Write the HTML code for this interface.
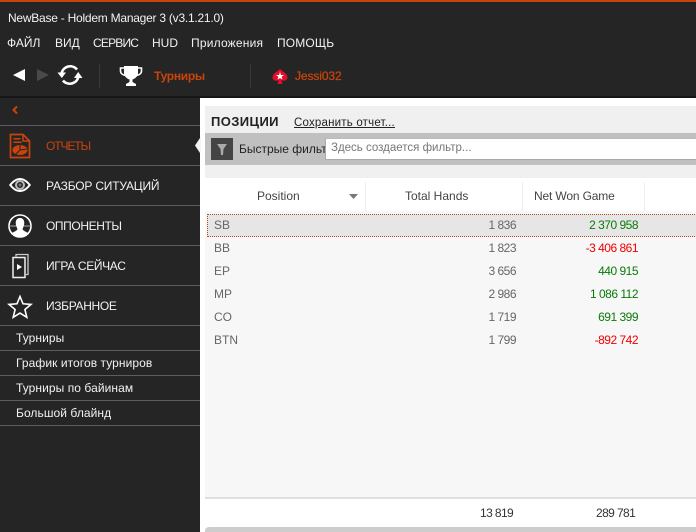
<!DOCTYPE html>
<html><head><meta charset="utf-8">
<style>
html,body{margin:0;padding:0;background:#252525}
#r{position:relative;width:696px;height:532px;overflow:hidden;background:#252525;font-family:"Liberation Sans",sans-serif;font-size:12px}
#r div,#r svg,#r a{position:absolute}
.t{white-space:nowrap;line-height:14px}
.w{color:#f2f2f2}
.o{color:#c8440c}
.l{left:0;width:200px;height:1px;background:#5e5e5e}
.m{left:46px;color:#f2f2f2;white-space:nowrap;line-height:14px;font-size:12px}
.s{left:16px;color:#f2f2f2;white-space:nowrap;line-height:14px;font-size:12px;letter-spacing:.07px}
.row{left:205px;width:491px;height:23px;color:#666}
.row div{top:4px;line-height:14px;white-space:nowrap;letter-spacing:-.5px}
.row .c1{left:9px;letter-spacing:0}
.c2{right:180px}
.c3{right:58px}
.g{color:#0a7a0a}
.d{color:#f00000}
</style></head><body>
<div id="r">
<div style="left:0;top:0;width:696px;height:2px;background:#c8440c"></div>
<div class="t w" style="left:8px;top:11px;font-size:12px;letter-spacing:-.24px">NewBase - Holdem Manager 3 (v3.1.21.0)</div>
<div class="t w" style="left:7px;top:36px">ФАЙЛ</div>
<div class="t w" style="left:55px;top:36px">ВИД</div>
<div class="t w" style="left:93px;top:36px;letter-spacing:-.8px">СЕРВИС</div>
<div class="t w" style="left:152px;top:36px">HUD</div>
<div class="t w" style="left:191px;top:36px;letter-spacing:.2px">Приложения</div>
<div class="t w" style="left:277px;top:36px;letter-spacing:.15px">ПОМОЩЬ</div>

<svg style="left:0;top:55px" width="100" height="40" viewBox="0 0 100 40">
<polygon points="13,20 25,14 25,26" fill="#fff"/>
<polygon points="49,20 37,14 37,26" fill="#4a4a4a"/>
<path d="M61.500 19A8.800 8.800 0 0 1 77 14.500M78.500 21A8.800 8.800 0 0 1 63 25.500" fill="none" stroke="#fff" stroke-width="2.600"/>
<polygon points="57.500,17.500 66,17.500 61.800,23" fill="#fff"/>
<polygon points="74,23 82.500,23 78.200,17" fill="#fff"/>
</svg>
<div style="left:99px;top:64px;width:1px;height:24px;background:#3a3a3a"></div>
<svg style="left:119px;top:64px" width="24" height="24" viewBox="0 0 24 24">
<path d="M5 2H19V9C19 13 15 15 13.500 15.500V18L17 20V22H7V20L10.500 18V15.500C9 15 5 13 5 9Z" fill="#fff"/>
<path d="M5 4H1.500V7C1.500 9.500 4 11 6.500 11.500M19 4H22.500V7C22.500 9.500 20 11 17.500 11.500" fill="none" stroke="#fff" stroke-width="1.600"/>
</svg>
<div class="t o" style="left:154px;top:69px;font-weight:bold;font-size:12px;letter-spacing:-.3px">Турниры</div>
<div style="left:250px;top:64px;width:1px;height:24px;background:#3a3a3a"></div>
<svg style="left:272px;top:68px" width="16" height="17" viewBox="0 0 16 17">
<path d="M8 1C10.500 3.500 15.500 5.500 15.500 9.500C15.500 12.500 11.500 13.500 9.500 12L10.500 16H5.500L6.500 12C4.500 13.500 .5 12.500 .5 9.500C.5 5.500 5.500 3.500 8 1Z" fill="#e0102c"/>
<polygon points="8,4 9,7 12,7 9.600,8.800 10.500,11.700 8,10 5.500,11.700 6.400,8.800 4,7 7,7" fill="#fff"/>
</svg>
<div class="t o" style="left:295px;top:69px;font-size:12px;letter-spacing:-.1px;-webkit-text-stroke:.25px #c8440c">Jessi032</div>
<div style="left:0;top:96px;width:696px;height:2px;background:#161616"></div>

<svg style="left:11px;top:105px" width="8" height="10" viewBox="0 0 8 10"><path d="M6 1.500L2.500 5L6 8.500" fill="none" stroke="#c8440c" stroke-width="2"/></svg>
<div class="l" style="top:125px"></div>
<div class="l" style="top:165px"></div>
<div class="l" style="top:205px"></div>
<div class="l" style="top:245px"></div>
<div class="l" style="top:285px"></div>
<div class="l" style="top:325px"></div>
<div class="l" style="top:350px"></div>
<div class="l" style="top:375px"></div>
<div class="l" style="top:400px"></div>
<div class="l" style="top:425px"></div>

<svg style="left:9px;top:133px" width="22" height="26" viewBox="0 0 22 26">
<path d="M1.500 1.500H14L20.500 8V24.500H1.500Z" fill="none" stroke="#c8440c" stroke-width="1.700"/>
<path d="M14 1.500V8H20.500" fill="none" stroke="#c8440c" stroke-width="1.500"/>
<rect x="4.500" y="5" width="7" height="1.500" fill="#c8440c"/><rect x="4.500" y="8.500" width="8" height="1.500" fill="#c8440c"/>
<ellipse cx="11" cy="17" rx="7.500" ry="5" fill="#c8440c"/>
<path d="M11 12V17L18 16M11 17L7 21" stroke="#252525" stroke-width="1" fill="none"/>
</svg>
<div class="m o" style="top:139px;color:#c8440c;letter-spacing:-1.1px">ОТЧЕТЫ</div>

<svg style="left:8px;top:176px" width="24" height="18" viewBox="0 0 24 18">
<path d="M1 9C5 3.500 9 2 12 2S19 3.500 23 9C19 14.500 15 16 12 16S5 14.500 1 9Z" fill="#fff"/>
<path d="M3.500 9C6.500 5.500 9 4 12 4S17.500 5.500 20.500 9C17.500 12.500 15 14 12 14S6.500 12.500 3.500 9Z" fill="#252525"/>
<circle cx="12" cy="9" r="4" fill="none" stroke="#bbb" stroke-width="2"/>
<circle cx="12" cy="9" r="1.500" fill="#777"/>
</svg>
<div class="m" style="top:179px;letter-spacing:-.2px">РАЗБОР СИТУАЦИЙ</div>

<svg style="left:8px;top:214px" width="24" height="24" viewBox="0 0 24 24">
<circle cx="12" cy="12" r="11" fill="none" stroke="#fff" stroke-width="1.600"/>
<path d="M12 4C15.500 4 16.500 7 16.200 10C16 12 15 14 14.500 15C15 17 19 18 21 19.500C18.500 22 15 23 12 23S5.500 22 3 19.500C5 18 9 17 9.500 15C9 14 8 12 7.800 10C7.500 7 8.500 4 12 4Z" fill="#fff"/>
<path d="M1 12H8M16 12H23" stroke="#aaa" stroke-width="1"/>
</svg>
<div class="m" style="top:219px;letter-spacing:-.4px">ОППОНЕНТЫ</div>

<svg style="left:11px;top:253px" width="20" height="26" viewBox="0 0 20 26">
<path d="M5 3.500V1.500H17V21.500H15" fill="none" stroke="#ccc" stroke-width="1.300"/>
<path d="M2 4.500H14V24.500H2Z" fill="#252525" stroke="#f0f0f0" stroke-width="1.500"/>
<polygon points="6,11 6,17 11,14" fill="#fff"/>
</svg>
<div class="m" style="top:259px;letter-spacing:-.35px">ИГРА СЕЙЧАС</div>

<svg style="left:7px;top:294px" width="26" height="25" viewBox="0 0 26 25">
<polygon points="13,2.500 16,9.800 24,10.400 17.900,15.500 19.800,23.300 13,19.100 6.200,23.300 8.100,15.500 2,10.400 10,9.800" fill="none" stroke="#fff" stroke-width="1.600"/>
</svg>
<div class="m" style="top:299px;letter-spacing:-.35px">ИЗБРАННОЕ</div>

<div class="s" style="top:331px">Турниры</div>
<div class="s" style="top:356px">График итогов турниров</div>
<div class="s" style="top:381px">Турниры по байинам</div>
<div class="s" style="top:406px">Большой блайнд</div>

<div style="left:200px;top:98px;width:496px;height:434px;background:#fff"></div>
<svg style="left:195px;top:138px" width="6" height="15" viewBox="0 0 6 15"><polygon points="5,0 0,7.500 5,15 6,15 6,0" fill="#f4f4f4"/></svg>
<div style="left:205px;top:106px;width:491px;height:27px;background:#f0f0f0"></div>
<div class="t" style="left:211px;top:115px;font-weight:bold;font-size:13px;letter-spacing:.4px;color:#222">ПОЗИЦИИ</div>
<div class="t" style="left:294px;top:116px;font-size:11.500px;letter-spacing:.2px;color:#222;text-decoration:underline">Сохранить отчет...</div>
<div style="left:205px;top:133px;width:491px;height:32px;background:#c0c0c0"></div>
<div style="left:211px;top:138px;width:22px;height:22px;background:#444"></div>
<svg style="left:216px;top:143px" width="12" height="13" viewBox="0 0 12 13"><polygon points="1,1 11,1 7.500,6 7,12 5,12 4.500,6" fill="#aaa"/></svg>
<div class="t" style="left:239px;top:142px;width:86px;overflow:hidden;color:#222;font-size:12px">Быстрые фильтры</div>
<div style="left:325px;top:138px;width:371px;height:20px;background:#fff;border-left:1px solid #aaa;border-bottom:1px solid #aaa;border-top:1px solid #bbb"></div>
<div class="t" style="left:331px;top:141px;color:#777;font-size:11.500px">Здесь создается фильтр...</div>
<div style="left:205px;top:165px;width:491px;height:13px;background:#f0f0f0"></div>

<div style="left:205px;top:178px;width:491px;height:33px;background:#fff"></div>
<div style="left:365px;top:182px;width:1px;height:29px;background:#eee"></div>
<div style="left:522px;top:182px;width:1px;height:29px;background:#eee"></div>
<div style="left:644px;top:182px;width:1px;height:29px;background:#eee"></div>
<div class="t" style="left:257px;top:189px;color:#444">Position</div>
<svg style="left:349px;top:194px" width="9" height="5" viewBox="0 0 9 5"><polygon points="0,0 9,0 4.500,5" fill="#777"/></svg>
<div class="t" style="left:405px;top:189px;color:#444">Total Hands</div>
<div class="t" style="left:534px;top:189px;color:#444;letter-spacing:-.15px">Net Won Game</div>

<div style="left:205px;top:211px;width:491px;height:287px;background:#f7f7f7"></div>
<div style="left:207px;top:214px;width:489px;height:21px;background:#e6e6e6;border-top:1px dotted #a85020;border-bottom:1px dotted #a85020;border-left:1px dotted #a85020"></div>
<div class="row" style="top:214px"><div class="c1">SB</div><div class="c2">1 836</div><div class="c3 g">2 370 958</div></div>
<div class="row" style="top:237px"><div class="c1">BB</div><div class="c2">1 823</div><div class="c3 d">-3 406 861</div></div>
<div class="row" style="top:260px"><div class="c1">EP</div><div class="c2">3 656</div><div class="c3 g">440 915</div></div>
<div class="row" style="top:283px"><div class="c1">MP</div><div class="c2">2 986</div><div class="c3 g">1 086 112</div></div>
<div class="row" style="top:306px"><div class="c1">CO</div><div class="c2">1 719</div><div class="c3 g">691 399</div></div>
<div class="row" style="top:329px"><div class="c1">BTN</div><div class="c2">1 799</div><div class="c3 d">-892 742</div></div>

<div style="left:205px;top:497px;width:491px;height:2px;background:#e0e0e0"></div>
<div style="left:205px;top:499px;width:491px;height:28px;background:#fff"></div>
<div class="t" style="left:480px;top:506px;color:#333;letter-spacing:-.6px">13 819</div>
<div class="t" style="left:596px;top:506px;color:#333;letter-spacing:-.6px">289 781</div>
<div style="left:205px;top:527px;width:491px;height:5px;background:#cdcdcd;border-radius:4px 0 0 0"></div>
</div>
</body></html>
